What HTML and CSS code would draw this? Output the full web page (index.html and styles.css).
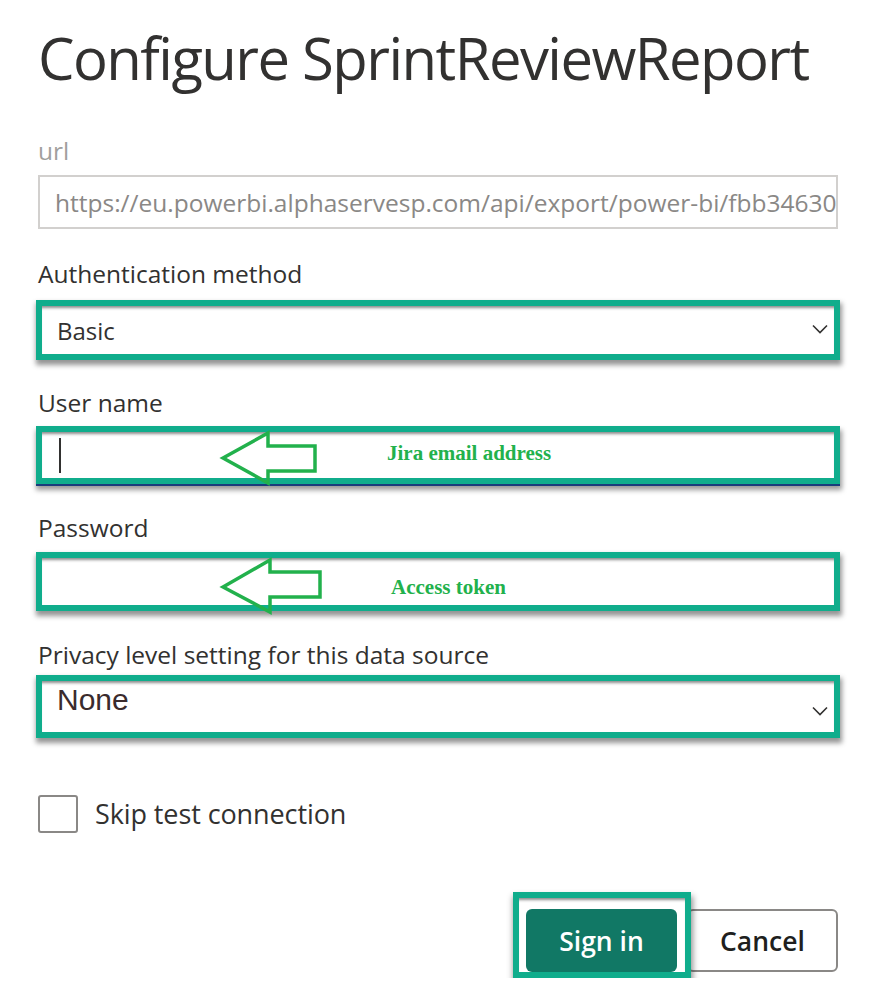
FILE: index.html
```html
<!DOCTYPE html>
<html lang="en">
<head>
<meta charset="utf-8">
<title>Configure SprintReviewReport</title>
<link rel="stylesheet" href="styles.css">
</head>
<body>
<div class="page">
  <h1 class="title">Configure SprintReviewReport</h1>

  <div class="field">
    <div class="label label-muted label-url">url</div>
    <div class="input input-disabled"><span class="url-text">https://eu.powerbi.alphaservesp.com/api/export/power-bi/fbb34630c2a1</span></div>
  </div>

  <div class="field">
    <div class="label label-auth">Authentication method</div>
    <div class="hl hl-auth">
      <span class="value">Basic</span>
      <svg class="chev" width="16" height="10" viewBox="0 0 16 10"><path d="M1 1.5 L8 8.5 L15 1.5" fill="none" stroke="#323130" stroke-width="1.6"/></svg>
    </div>
  </div>

  <div class="field">
    <div class="label label-user">User name</div>
    <div class="hl hl-user">
      <span class="caret"></span>
      <svg class="arrow" width="104" height="60" viewBox="0 0 104 60"><path d="M6 29 L51 4 L51 17 L98 17 L98 42 L51 42 L51 54 Z" fill="none" stroke="#22b14c" stroke-width="3.5" stroke-linejoin="miter"/></svg>
      <span class="note note-user">Jira email address</span>
    </div>
  </div>

  <div class="field">
    <div class="label label-pass">Password</div>
    <div class="hl hl-pass">
      <svg class="arrow" width="108" height="60" viewBox="0 0 108 60"><path d="M6 32 L53 5 L53 17 L103 17 L103 42 L53 42 L53 57 Z" fill="none" stroke="#22b14c" stroke-width="3.5" stroke-linejoin="miter"/></svg>
      <span class="note note-pass">Access token</span>
    </div>
  </div>

  <div class="field">
    <div class="label label-privacy">Privacy level setting for this data source</div>
    <div class="hl hl-privacy">
      <span class="value value-none">None</span>
      <svg class="chev chev-low" width="16" height="10" viewBox="0 0 16 10"><path d="M1 1.5 L8 8.5 L15 1.5" fill="none" stroke="#323130" stroke-width="1.6"/></svg>
    </div>
  </div>

  <label class="check">
    <span class="box"></span>
    <span class="check-text">Skip test connection</span>
  </label>

  <div class="actions">
    <div class="hl-btn"><button class="btn btn-primary">Sign in</button></div>
    <button class="btn btn-secondary">Cancel</button>
  </div>
</div>
</body>
</html>
```

FILE: styles.css
```css
html, body {
  margin: 0;
  padding: 0;
  background: #ffffff;
}

.page {
  width: 800px;
  padding: 0 0 0 38px;
  font-family: "Open Sans", "Noto Sans", sans-serif;
  color: #323130;
}

.title {
  margin: 22px 0 0 0;
  font-size: 58px;
  font-weight: 400;
  line-height: 72px;
  letter-spacing: -1.55px;
  color: #323130;
  white-space: nowrap;
}

.field {
  display: flex;
  flex-direction: column;
}

.label {
  font-size: 24.5px;
  line-height: 30px;
  color: #323130;
  white-space: nowrap;
}

.label-url {
  margin: 42px 0 9px 0;
  color: #a19f9d;
}

.label-auth {
  margin: 30px 0 11px 0;
}

.label-user {
  margin: 28px 0 8px 0;
}

.label-pass {
  margin: 29px 0 9px 0;
}

.label-privacy {
  margin: 29px 0 5px 0;
}

.input {
  box-sizing: border-box;
  height: 54px;
  border: 2px solid #d2d0ce;
  display: flex;
  align-items: center;
  padding: 0 0 0 15px;
  overflow: hidden;
  white-space: nowrap;
}

.url-text {
  font-size: 24.5px;
  color: #8a8886;
}

.hl {
  position: relative;
  box-sizing: border-box;
  margin-left: -2px;
  width: 804px;
  height: 60px;
  border: 6px solid #10ad8c;
  background: #ffffff;
  box-shadow: 1px 4px 5px 1px rgba(0, 0, 0, 0.42), inset 0 4px 3px -2px rgba(0, 0, 0, 0.45);
  display: flex;
  align-items: center;
  padding: 0 0 0 15px;
}

.hl-user {
  height: 58px;
  box-shadow: 0 2px 0 0 #1a3c7c, 1px 5px 5px 1px rgba(0, 0, 0, 0.4), inset 0 4px 3px -2px rgba(0, 0, 0, 0.45);
}

.hl-pass {
  height: 59px;
}

.hl-privacy {
  height: 63px;
  align-items: flex-start;
}

.value {
  font-size: 24px;
  color: #323130;
}

.value-none {
  font-family: "Liberation Sans", Arial, sans-serif;
  font-size: 30px;
  color: #3a2b2d;
  line-height: 32px;
  margin-top: 3px;
}

.chev {
  position: absolute;
  right: 6px;
  top: 18px;
}

.chev-low {
  top: 25px;
}

.caret {
  display: block;
  width: 2px;
  height: 35px;
  background: #323130;
  margin-left: 2px;
}

.arrow {
  position: absolute;
  left: 175px;
  top: -3px;
}

.note {
  position: absolute;
  font-family: "Liberation Serif", "Times New Roman", serif;
  font-weight: 700;
  font-size: 21px;
  line-height: 24px;
  color: #22b14c;
  white-space: nowrap;
}

.note-user {
  left: 345px;
  top: 9px;
}

.note-pass {
  left: 349px;
  top: 17px;
}

.check {
  display: flex;
  align-items: center;
  gap: 17px;
  margin-top: 57px;
  height: 38px;
}

.box {
  box-sizing: border-box;
  width: 40px;
  height: 38px;
  border: 2px solid #8a8886;
  border-radius: 3px;
}

.check-text {
  font-size: 27px;
  line-height: 38px;
  color: #323130;
  letter-spacing: -0.1px;
}

.actions {
  display: flex;
  justify-content: flex-end;
  align-items: flex-end;
  margin-top: 59px;
  padding-right: 0;
}

.hl-btn {
  position: relative;
  z-index: 1;
  box-sizing: border-box;
  border: 6px solid #10ad8c;
  padding: 11px 8px 0 7px;
  background: transparent;
  box-shadow: 1px 5px 6px 1px rgba(0, 0, 0, 0.42), inset 0 4px 3px -2px rgba(0, 0, 0, 0.45);
  margin-right: -4px;
}

.btn {
  box-sizing: border-box;
  height: 63px;
  border-radius: 6px;
  font-family: "Open Sans", "Noto Sans", sans-serif;
  font-size: 26.5px;
  font-weight: 600;
  cursor: pointer;
}

.btn-primary {
  display: block;
  width: 151px;
  background: #117865;
  color: #ffffff;
  border: none;
}

.btn-secondary {
  width: 151px;
  margin-bottom: 6px;
  background: #ffffff;
  color: #201f1e;
  border: 2px solid #8a8886;
}
```
